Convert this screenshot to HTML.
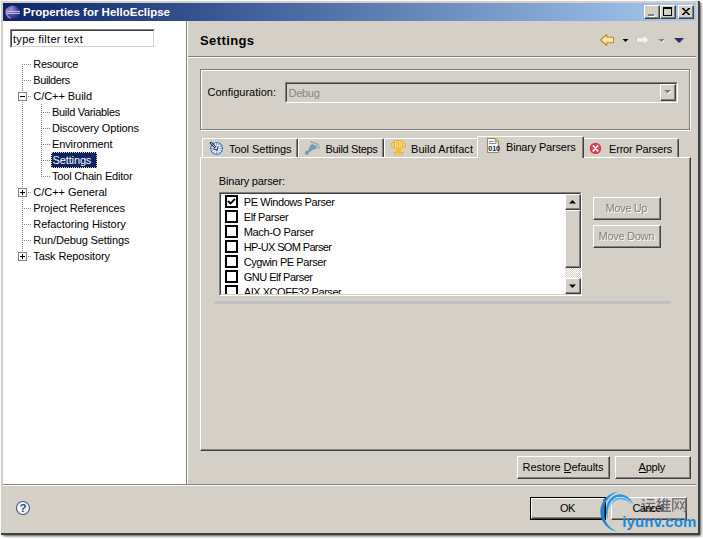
<!DOCTYPE html>
<html><head><meta charset="utf-8"><title>Properties for HelloEclipse</title>
<style>
html,body{margin:0;padding:0;}
body{width:703px;height:539px;overflow:hidden;background:#fff;position:relative;font-family:"Liberation Sans",sans-serif;font-size:11px;}
div,span,svg{position:absolute;box-sizing:border-box;}
.t{white-space:pre;font-size:11px;line-height:14px;color:#000;}
#shadow{left:4px;top:4px;width:696px;height:531px;background:#404040;box-shadow:0 0 2.5px 0.6px rgba(45,45,45,.85);}
#win{left:1px;top:1px;width:699px;height:534px;background:#d4d0c8;border-right:2px solid #404040;border-bottom:2px solid #404040;}
#title{left:3px;top:3px;width:693px;height:18px;background:linear-gradient(to right,#0a246a 0%,#a6caf0 100%);}
.cb{width:16px;height:14px;top:5px;background:#d4d0c8;border:1px solid;border-color:#fff #404040 #404040 #fff;box-shadow:inset -1px -1px 0 #808080;}
#left{left:3px;top:21px;width:183px;height:463px;background:#fff;}
.hsep{height:2px;border-top:1px solid #808080;border-bottom:1px solid #fff;}
.sunken{border:1px solid;border-color:#808080 #fff #fff #808080;}
.sunken>i{position:absolute;left:0;top:0;right:0;bottom:0;border:1px solid;border-color:#404040 #d4d0c8 #d4d0c8 #404040;}
.btn{background:#d4d0c8;border:1px solid;border-color:#fff #404040 #404040 #fff;box-shadow:inset -1px -1px 0 #808080,inset 1px 1px 0 #d4d0c8;}
.group{border:1px solid #808080;box-shadow:inset 1px 1px 0 #fff,1px 1px 0 #fff;}
.tab{top:138px;height:19px;background:#d4d0c8;border-top:1px solid #fff;border-left:1px solid #fff;border-right:1px solid #404040;box-shadow:inset -1px 0 0 #808080;border-radius:2px 2px 0 0;}
.dot-h{height:1px;background-image:linear-gradient(to right,#808080 50%,transparent 50%);background-size:2px 1px;}
.dot-v{width:1px;background-image:linear-gradient(to bottom,#808080 50%,transparent 50%);background-size:1px 2px;}
.pm{width:9px;height:9px;border:1px solid #808080;background:#fff;}
.pm:before{content:"";position:absolute;left:1px;top:3px;width:5px;height:1px;background:#000;}
.pm.plus:after{content:"";position:absolute;left:3px;top:1px;width:1px;height:5px;background:#000;}
.chk{left:4px;width:13px;height:13px;background:#fff;border:2px solid #000;}
</style></head><body>
<div id="shadow"></div>
<div id="win"></div>
<div id="title"></div>
<!-- eclipse icon -->
<svg style="left:5px;top:4px" width="16" height="16" viewBox="0 0 16 16">
 <defs><radialGradient id="eg" cx="0.35" cy="0.3" r="0.8"><stop offset="0" stop-color="#a096d6"/><stop offset="0.5" stop-color="#5a4ca6"/><stop offset="1" stop-color="#2a2870"/></radialGradient></defs>
 <circle cx="7.8" cy="8" r="6.6" fill="url(#eg)"/>
 <path d="M2.200 4.500 A6.600 6.600 0 0 0 5.500 14.200" stroke="#d8a4d2" stroke-width="1.500" fill="none" opacity=".8"/>
 <rect x="2" y="6.900" width="13" height="1" fill="#c4cef0"/>
 <rect x="2" y="8.900" width="13" height="1" fill="#c4cef0"/>
</svg>
<!-- caption buttons -->
<div class="cb" style="left:644px"></div>
<div class="cb" style="left:660px"></div>
<div class="cb" style="left:678px"></div>
<div style="left:649px;top:15px;width:6px;height:2px;background:#fff"></div><div style="left:648px;top:14px;width:6px;height:2px;background:#808080"></div>
<div style="left:663px;top:7px;width:9px;height:9px;border:1px solid #000;border-top-width:2px"></div>
<svg style="left:682px;top:8px" width="8" height="7" viewBox="0 0 8 7"><path d="M0 0L8 7M1 0L7 7 M8 0L0 7M7 0L1 7" stroke="#000" stroke-width="1.2" fill="none"/></svg>

<!-- left pane -->
<div id="left"></div>
<div style="left:3px;top:484px;width:693px;height:1px;background:#808080"></div>
<div style="left:3px;top:485px;width:693px;height:1px;background:#fff"></div>
<!-- sash -->
<div style="left:186px;top:21px;width:1px;height:463px;background:#808080"></div>
<div style="left:187px;top:21px;width:1px;height:463px;background:#fff"></div>
<!-- filter box -->
<div class="sunken" style="left:10px;top:29px;width:145px;height:19px;background:#fff"><i></i></div>
<!-- tree lines -->
<div class="dot-v" style="left:22px;top:64px;height:193px"></div>
<div class="dot-h" style="left:22px;top:64px;width:9px"></div>
<div class="dot-h" style="left:22px;top:80px;width:9px"></div>
<div class="dot-h" style="left:22px;top:96px;width:9px"></div>
<div class="dot-h" style="left:22px;top:192px;width:9px"></div>
<div class="dot-h" style="left:22px;top:208px;width:9px"></div>
<div class="dot-h" style="left:22px;top:224px;width:9px"></div>
<div class="dot-h" style="left:22px;top:240px;width:9px"></div>
<div class="dot-h" style="left:22px;top:256px;width:9px"></div>
<div class="dot-v" style="left:41px;top:104px;height:73px"></div>
<div class="dot-h" style="left:41px;top:112px;width:9px"></div>
<div class="dot-h" style="left:41px;top:128px;width:9px"></div>
<div class="dot-h" style="left:41px;top:144px;width:9px"></div>
<div class="dot-h" style="left:41px;top:160px;width:9px"></div>
<div class="dot-h" style="left:41px;top:176px;width:9px"></div>
<div class="pm" style="left:18px;top:92px"></div>
<div class="pm plus" style="left:18px;top:188px"></div>
<div class="pm plus" style="left:18px;top:252px"></div>
<!-- selection -->
<div style="left:51px;top:152px;width:46px;height:16px;background:linear-gradient(#0a246a,#0a246a) padding-box,#000 border-box;border:1px dotted #f0d890"></div>

<!-- right header -->
<div class="hsep" style="left:188px;top:56px;width:508px"></div>
<!-- nav arrows -->
<svg style="left:598px;top:32px" width="92" height="16" viewBox="0 0 92 16">
 <defs><linearGradient id="ya" x1="0" y1="0" x2="0" y2="1"><stop offset="0" stop-color="#fff9e2"/><stop offset="1" stop-color="#fbd267"/></linearGradient>
 <linearGradient id="ga" x1="0" y1="0" x2="0" y2="1"><stop offset="0" stop-color="#fdfdfc"/><stop offset="1" stop-color="#e4e1db"/></linearGradient></defs>
 <path d="M2.500 8 L8.800 2.500 L8.800 5.300 L15.500 5.300 L15.500 10.700 L8.800 10.700 L8.800 13.500 Z" fill="url(#ya)" stroke="#c98a1c" stroke-width="1.100" stroke-linejoin="round"/>
 <path d="M24.500 7 L30.500 7 L27.500 10 Z" fill="#000"/>
 <path d="M51.500 8 L45.200 2.500 L45.200 5.300 L38.500 5.300 L38.500 10.700 L45.200 10.700 L45.200 13.500 Z" fill="url(#ga)" stroke="#c6c2ba" stroke-width="1" stroke-linejoin="round"/>
 <path d="M60.500 7 L66.500 7 L63.500 10 Z" fill="#808080"/><path d="M64 10.500 L67 7.500" stroke="#fff" stroke-width="1"/>
 <path d="M76 6 L86 6 L81 11 Z" fill="#2b2a6b"/><path d="M81.500 11 L86.300 6.200" stroke="#8c8aa6" stroke-width=".8"/>
</svg>
<!-- configuration group -->
<div class="group" style="left:200px;top:69px;width:490px;height:61px"></div>
<div class="sunken" style="left:285px;top:82px;width:393px;height:21px;background:#d4d0c8"><i></i></div>
<div class="btn" style="left:660px;top:84px;width:16px;height:17px"></div>
<svg style="left:664px;top:90px" width="9" height="6" viewBox="0 0 9 6"><path d="M1 1 L8 1 L4.500 4.500Z" fill="#fff"/><path d="M0 0 L7 0 L3.500 3.500Z" fill="#808080"/></svg>

<!-- tab folder body -->
<div id="tabbody" style="left:200px;top:157px;width:491px;height:294px;background:#d4d0c8;border:1px solid;border-color:#fff #404040 #404040 #fff;box-shadow:inset -1px -1px 0 #808080"></div>
<!-- tabs -->
<div class="tab" style="left:202px;width:96px"></div>
<div class="tab" style="left:298px;width:86px"></div>
<div class="tab" style="left:384px;width:95px"></div>
<div class="tab" style="left:583px;width:96px"></div>
<div class="tab" style="left:477px;width:107px;top:136px;height:22px;"></div>
<!-- tab icons -->
<svg style="left:208px;top:140px" width="17" height="17" viewBox="0 0 17 17">
 <circle cx="8.600" cy="8.400" r="5.900" fill="#eef4fb" stroke="#3f8fd6" stroke-width="1.200"/>
 <path d="M8.60 5.40L8.60 2.10M10.40 5.28L11.75 2.94M11.72 6.60L14.06 5.25M11.60 8.40L14.90 8.40M11.72 10.20L14.06 11.55M10.40 11.52L11.75 13.86M8.60 11.40L8.60 14.70M6.80 11.52L5.45 13.86M5.48 10.20L3.14 11.55M5.60 8.40L2.30 8.40M5.48 6.60L3.14 5.25M6.80 5.28L5.45 2.94" stroke="#3b5a8a" stroke-width=".8" opacity=".8"/>
 <path d="M2.200 2.200 L7.800 7.800" stroke="#1f2f66" stroke-width="2.300"/>
 <path d="M3 3 L7.600 7.600" stroke="#f3dc7a" stroke-width=".8"/>
 <path d="M5.300 8.800 L9 10.200 L10.300 6.300" stroke="#1f2f66" stroke-width="1.100" fill="none"/>
</svg>
<svg style="left:304px;top:140px" width="17" height="16" viewBox="0 0 17 16" fill="#7b9ab6">
 <circle cx="2.800" cy="13" r="2.100"/>
 <path d="M3 11.500 L5 8.500 L6 5.500 L8 4 L12.500 6 L13 8.500 L9.500 9.500 L7 11 L4.500 12.500Z"/>
 <rect x="6.800" y="1.200" width="1.700" height="1.700"/><rect x="9.300" y="2" width="1.700" height="1.700"/><rect x="11.600" y="3" width="1.700" height="1.700"/><rect x="13.300" y="4.600" width="1.600" height="1.600"/><rect x="14.200" y="6.800" width="1.600" height="1.600"/>
</svg>
<svg style="left:390px;top:139px" width="17" height="17" viewBox="0 0 17 17">
 <path d="M5.500 1.500 H11.500 L12.500 2.500 V7.500 L11 10 H6 L4.500 7.500 V2.500 Z" fill="#fcdf80" stroke="#f5b02c" stroke-width="1.100"/>
 <path d="M4.500 3.200 H2.500 L1.500 4.200 V7 L2.500 8.500 H5 M12.500 3.200 H14.500 L15.500 4.200 V7 L14.500 8.500 H12" fill="none" stroke="#f5b02c" stroke-width="1.100"/>
 <path d="M6.800 2V10M8.500 2V10M10.200 2V10" stroke="#f5b02c" stroke-width=".8"/>
 <rect x="6" y="10" width="5" height="3.200" fill="#f7be3e"/>
 <rect x="4" y="13" width="9" height="3" fill="#f5b02c"/><rect x="5" y="14" width="7" height="1" fill="#fbd86a"/>
</svg>
<svg style="left:486px;top:137px" width="16" height="17" viewBox="0 0 16 17">
 <path d="M1.500 1.500 H9 L12.500 5 V15.500 H1.500 Z" fill="#fbfcfe" stroke="#a98a42" stroke-width="1.100"/>
 <path d="M9 1.500 V5 H12.500 Z" fill="#e9cf86" stroke="#a98a42" stroke-width=".8"/>
 <path d="M3 4.500H7.500M3 6.500H10.500" stroke="#6f8bc8" stroke-width="1.100"/>
 <text x="2.300" y="14.300" font-family="Liberation Sans, sans-serif" font-size="7.200" font-weight="bold" fill="#101c58" letter-spacing="-.1">010</text>
</svg>
<svg style="left:589px;top:142px" width="13" height="13" viewBox="0 0 13 13">
 <circle cx="6.500" cy="6.400" r="5.700" fill="#e3334a"/>
 <circle cx="6.500" cy="6.400" r="4" fill="#ec6070" opacity=".55"/>
 <path d="M4.200 3.800 L8.800 9 M8.800 3.800 L4.200 9" stroke="#fff" stroke-width="1.600" stroke-linecap="round"/>
</svg>

<!-- list -->
<div class="sunken" style="left:219px;top:192px;width:363px;height:104px;background:#fff"><i></i></div>
<div id="listclip" style="left:221px;top:194px;width:344px;height:100px;overflow:hidden">
 <div class="chk" style="top:1px"></div>
 <svg style="left:6px;top:3px" width="9" height="9" viewBox="0 0 9 9"><path d="M1 4 L3.500 6.500 L8 2" stroke="#000" stroke-width="1.800" fill="none"/></svg>
 <div class="chk" style="top:16px"></div>
 <div class="chk" style="top:31px"></div>
 <div class="chk" style="top:46px"></div>
 <div class="chk" style="top:61px"></div>
 <div class="chk" style="top:76px"></div>
 <div class="chk" style="top:91px"></div>
<span class="t" style="left:22.75px;top:1.19px;letter-spacing:-0.415px;">PE Windows Parser</span>
<span class="t" style="left:22.75px;top:16.19px;letter-spacing:-0.380px;">Elf Parser</span>
<span class="t" style="left:22.75px;top:31.19px;letter-spacing:-0.352px;">Mach-O Parser</span>
<span class="t" style="left:22.75px;top:46.19px;letter-spacing:-0.644px;">HP-UX SOM Parser</span>
<span class="t" style="left:22.75px;top:61.19px;letter-spacing:-0.423px;">Cygwin PE Parser</span>
<span class="t" style="left:22.75px;top:76.19px;letter-spacing:-0.503px;">GNU Elf Parser</span>
<span class="t" style="left:22.75px;top:91.19px;letter-spacing:-0.459px;">AIX XCOFF32 Parser</span>

</div>
<!-- scrollbar -->
<div style="left:565px;top:194px;width:16px;height:100px;background:#e9e7e3;background-image:repeating-conic-gradient(#fff 0% 25%,#d4d0c8 0% 50%);background-size:2px 2px"></div>
<div class="btn" style="left:565px;top:194px;width:16px;height:16px"></div>
<div class="btn" style="left:565px;top:210px;width:16px;height:58px"></div>
<div class="btn" style="left:565px;top:278px;width:16px;height:16px"></div>
<svg style="left:569px;top:199px" width="8" height="5" viewBox="0 0 8 5"><path d="M0 4.500 H7 L3.500 1Z" fill="#000"/></svg>
<svg style="left:569px;top:284px" width="8" height="5" viewBox="0 0 8 5"><path d="M0 .5 H7 L3.500 4Z" fill="#000"/></svg>
<!-- move buttons -->
<div class="btn" style="left:593px;top:197px;width:68px;height:23px"></div>
<div class="btn" style="left:593px;top:225px;width:68px;height:23px"></div>
<!-- separator under list -->
<div style="left:214px;top:301px;width:457px;height:3px;background:#c0bfc1"></div>

<!-- bottom buttons -->
<div class="btn" style="left:517px;top:456px;width:93px;height:23px"></div>
<div class="btn" style="left:615px;top:456px;width:76px;height:23px"></div>
<div style="left:530px;top:497px;width:76px;height:23px;background:#000"></div>
<div class="btn" style="left:531px;top:498px;width:74px;height:21px"></div>
<div class="btn" style="left:611px;top:497px;width:76px;height:23px"></div>
<!-- mnemonics underline -->
<div style="left:564px;top:472px;width:7px;height:1px;background:#000"></div>
<div style="left:639px;top:472px;width:7px;height:1px;background:#000"></div>

<!-- help icon -->
<svg style="left:14px;top:500px" width="18" height="17" viewBox="0 0 18 17">
 <circle cx="8.950" cy="8" r="6.500" fill="#f3f8fd" stroke="#3f5a88" stroke-width="1.100"/>
 <text x="8.950" y="12" text-anchor="middle" font-family="Liberation Sans, sans-serif" font-size="11.500" font-weight="bold" fill="#2f4876">?</text>
</svg>

<!-- watermark -->
<svg style="left:595px;top:488px" width="44" height="48" viewBox="596 488 44 48">
 <defs><linearGradient id="sw" x1="0" y1="0" x2="1" y2="0"><stop offset="0" stop-color="#1878d0"/><stop offset="1" stop-color="#2fb0f4"/></linearGradient></defs>
 <path d="M620.500 491.500 A20.300 20.300 0 0 0 620 532 A20.900 20.900 0 0 1 620.500 491.500 Z" fill="url(#sw)"/>
 <path d="M634.500 504.500 C631 497 625 493.500 619 494.500 C611 496 606.500 504 607 512 C607.200 515 608 517.500 609 519 C607.500 511 609.500 502 616 498 C622 494.800 629.500 497.500 634.500 504.500 Z" fill="#2196e8"/>
 <path d="M633 505.500 C629 499 623.500 496.500 618.500 498 C613 500 610.500 505 610.300 510.500 C611.300 505 614 501 619 499.500 C624 498.300 629 500.500 633 505.500 Z" fill="#45aef2"/>
</svg>
<svg style="left:641px;top:497px" width="47" height="16" viewBox="0 0 47 15" preserveAspectRatio="none" fill="none" stroke="#6c6c72" stroke-width="1.300">
 <!-- 运 -->
 <path d="M1.500 2 L3.500 4 M0.500 6.500 H3 V11.500 L1 13 M3 11.500 Q8 14 14.500 13.200 M6 2.500 H13 M4.800 6 H14.200 M9 6 L6.500 10.500 H12.500 M11 8.500 L13 11"/>
 <!-- 维 -->
 <path d="M19 1 L16.500 4.500 H19.500 L16.500 8.500 H20 M16 12.500 L20 11 M18 6 V9 M23.500 1 L21.500 5 M22.500 3.500 V13.500 M22.500 4 H29.500 M25.500 1.500 L26.500 3.500 M26 4 V13 M22.500 7 H29 M22.500 10 H29 M22.500 13.300 H30"/>
 <!-- 网 -->
 <path d="M31.800 13.800 V1.800 H45 V12.500 Q45 13.800 42.800 13.500 M33.800 4 L37.800 11.500 M37.800 4 L33.800 12 M39.300 4 L43.300 11.500 M43.300 4 L39.300 12"/>
</svg>

<span class="t" style="left:23.00px;top:4.77px;font-size:11.5px;line-height:14.5px;letter-spacing:0.000px;color:#fff;font-weight:bold;">Properties for HelloEclipse</span>
<span class="t" style="left:13.00px;top:31.69px;font-size:11px;line-height:14px;letter-spacing:0.286px;color:#000;">type filter text</span>
<span class="t" style="left:200.00px;top:32.50px;font-size:13px;line-height:16px;letter-spacing:0.400px;color:#000;font-weight:bold;">Settings</span>
<span class="t" style="left:33.25px;top:56.89px;font-size:11px;line-height:14px;letter-spacing:-0.291px;color:#000;">Resource</span>
<span class="t" style="left:33.25px;top:72.89px;font-size:11px;line-height:14px;letter-spacing:-0.375px;color:#000;">Builders</span>
<span class="t" style="left:33.25px;top:88.89px;font-size:11px;line-height:14px;letter-spacing:-0.051px;color:#000;">C/C++ Build</span>
<span class="t" style="left:33.25px;top:184.89px;font-size:11px;line-height:14px;letter-spacing:-0.018px;color:#000;">C/C++ General</span>
<span class="t" style="left:33.25px;top:200.89px;font-size:11px;line-height:14px;letter-spacing:-0.100px;color:#000;">Project References</span>
<span class="t" style="left:33.25px;top:216.89px;font-size:11px;line-height:14px;letter-spacing:-0.055px;color:#000;">Refactoring History</span>
<span class="t" style="left:33.25px;top:232.89px;font-size:11px;line-height:14px;letter-spacing:-0.136px;color:#000;">Run/Debug Settings</span>
<span class="t" style="left:33.25px;top:248.89px;font-size:11px;line-height:14px;letter-spacing:-0.101px;color:#000;">Task Repository</span>
<span class="t" style="left:52.00px;top:104.89px;font-size:11px;line-height:14px;letter-spacing:-0.304px;color:#000;">Build Variables</span>
<span class="t" style="left:52.00px;top:120.89px;font-size:11px;line-height:14px;letter-spacing:-0.148px;color:#000;">Discovery Options</span>
<span class="t" style="left:52.00px;top:136.89px;font-size:11px;line-height:14px;letter-spacing:-0.115px;color:#000;">Environment</span>
<span class="t" style="left:52.00px;top:168.89px;font-size:11px;line-height:14px;letter-spacing:-0.193px;color:#000;">Tool Chain Editor</span>
<span class="t" style="left:52.50px;top:152.89px;font-size:11px;line-height:14px;letter-spacing:-0.125px;color:#fff;">Settings</span>
<span class="t" style="left:207.50px;top:85.19px;font-size:11px;line-height:14px;letter-spacing:0.000px;color:#000;">Configuration:</span>
<span class="t" style="left:288.50px;top:85.69px;font-size:11px;line-height:14px;letter-spacing:-0.284px;color:#86868e;">Debug</span>
<span class="t" style="left:229.00px;top:141.69px;font-size:11px;line-height:14px;letter-spacing:-0.037px;color:#000;">Tool Settings</span>
<span class="t" style="left:325.50px;top:141.69px;font-size:11px;line-height:14px;letter-spacing:-0.332px;color:#000;">Build Steps</span>
<span class="t" style="left:411.00px;top:141.69px;font-size:11px;line-height:14px;letter-spacing:0.061px;color:#000;">Build Artifact</span>
<span class="t" style="left:506.00px;top:139.69px;font-size:11px;line-height:14px;letter-spacing:-0.189px;color:#000;">Binary Parsers</span>
<span class="t" style="left:609.00px;top:141.69px;font-size:11px;line-height:14px;letter-spacing:-0.185px;color:#000;">Error Parsers</span>
<span class="t" style="left:218.75px;top:173.69px;font-size:11px;line-height:14px;letter-spacing:-0.160px;color:#000;">Binary parser:</span>
<span class="t" style="left:606.50px;top:201.69px;font-size:11px;line-height:14px;letter-spacing:-0.362px;color:#fff;">Move Up</span>
<span class="t" style="left:605.50px;top:200.69px;font-size:11px;line-height:14px;letter-spacing:-0.362px;color:#858178;">Move Up</span>
<span class="t" style="left:599.50px;top:229.69px;font-size:11px;line-height:14px;letter-spacing:-0.286px;color:#fff;">Move Down</span>
<span class="t" style="left:598.50px;top:228.69px;font-size:11px;line-height:14px;letter-spacing:-0.286px;color:#858178;">Move Down</span>
<span class="t" style="left:522.50px;top:460.19px;font-size:11px;line-height:14px;letter-spacing:-0.059px;color:#000;">Restore Defaults</span>
<span class="t" style="left:638.50px;top:460.19px;font-size:11px;line-height:14px;letter-spacing:-0.206px;color:#000;">Apply</span>
<span class="t" style="left:560.00px;top:501.19px;font-size:11px;line-height:14px;letter-spacing:-0.453px;color:#000;">OK</span>
<span class="t" style="left:632.50px;top:501.19px;font-size:11px;line-height:14px;letter-spacing:-0.708px;color:#000;">Cancel</span>

<span class="t" style="left:622.30px;top:512.80px;font-size:15px;line-height:18px;letter-spacing:0.125px;color:#1888de;font-weight:bold;">iyunv.com</span>
</body></html>
